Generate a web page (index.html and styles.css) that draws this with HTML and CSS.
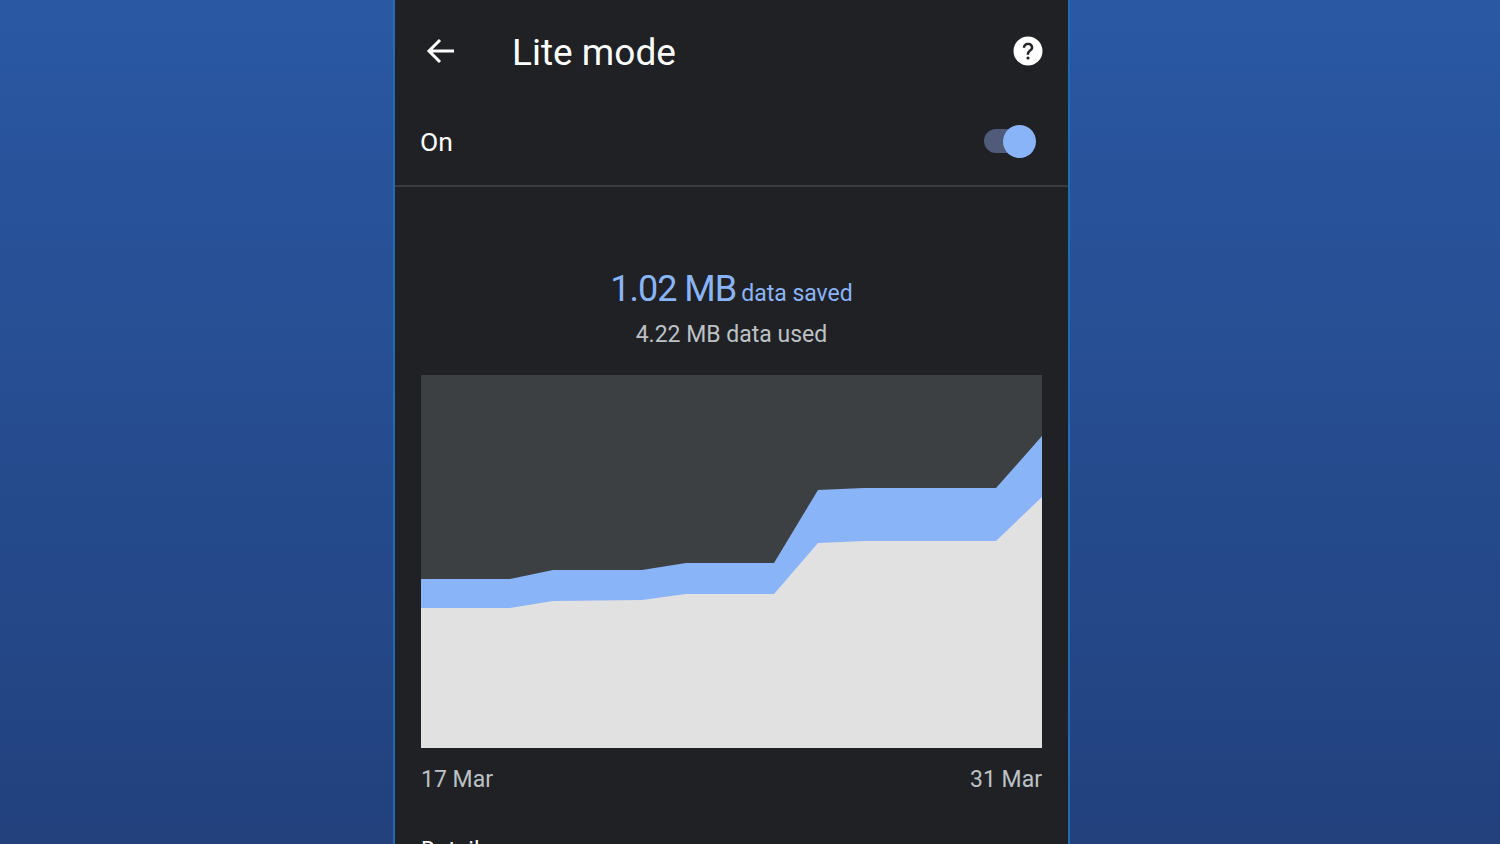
FILE: index.html
```html
<!DOCTYPE html>
<html lang="en">
<head>
  <meta charset="UTF-8">
  <meta name="viewport" content="width=device-width, initial-scale=1.0">
  <title>Lite mode</title>
  <link rel="stylesheet" href="styles.css">
</head>
<body>
  <div class="phone">
    <div class="toolbar">
      <svg class="back" width="30" height="26" viewBox="0 0 30 26">
        <path d="M28 13H3M14 2L3 13l11 11" fill="none" stroke="#fff" stroke-width="3"/>
      </svg>
      <div class="title">Lite mode</div>
      <svg class="help" width="30" height="30" viewBox="0 0 30 30">
        <circle cx="15" cy="15" r="14.5" fill="#fff"/>
        <path d="M9.8 11.8c0-3 2.3-5 5.3-5s5.200 2 5.200 4.700c0 3.600-4.200 3.700-4.200 7.300h-2.400c0-4.800 4.100-4.700 4.100-7.200 0-1.500-1.200-2.500-2.700-2.500s-2.800 1-2.800 2.700z" fill="#202124"/>
        <circle cx="15" cy="22" r="1.600" fill="#202124"/>
      </svg>
    </div>
    <div class="switch-row">
      <span class="on-label">On</span>
      <div class="switch"><div class="knob"></div></div>
    </div>
    <div class="summary">
      <div class="saved"><span class="saved-num">1.02 MB</span> <span class="saved-label">data saved</span></div>
      <div class="used">4.22 MB data used</div>
    </div>
    <svg class="chart" width="621" height="373" viewBox="0 0 621 373">
      <rect width="621" height="373" fill="#3c4043"/>
      <polygon fill="#8ab4f8" points="0,204 89,204 132,195 221,195 265,188 353,188 397,115 443,113 575,113 621,61 621,373 0,373"/>
      <polygon fill="#e1e1e1" points="0,233 89,233 132,226 221,225 265,219 353,219 397,168 443,166 575,166 621,122 621,373 0,373"/>
    </svg>
    <div class="dates">
      <span>17 Mar</span>
      <span>31 Mar</span>
    </div>
    <div class="details">Details</div>
  </div>
</body>
</html>
```

FILE: styles.css
```css
body {
  margin: 0;
  height: 844px;
  overflow: hidden;
  display: flex;
  background: linear-gradient(#2a58a3, #22417d);
  font-family: Roboto, "Liberation Sans", sans-serif;
}

.phone {
  box-sizing: border-box;
  width: 677px;
  height: 844px;
  margin-left: 393px;
  padding: 0 26px;
  overflow: hidden;
  background: #202124;
  border-left: 2px solid #1f6cb5;
  border-right: 2px solid #1f6cb5;
  color: #fff;
}

.toolbar {
  display: flex;
  align-items: center;
  height: 102px;
}

.back {
  margin-left: 5px;
}

.title {
  flex: 1;
  margin-left: 56px;
  padding-top: 2px;
  font-size: 37px;
}

.help {
  margin-right: -1px;
}

.switch-row {
  display: flex;
  align-items: center;
  justify-content: space-between;
  height: 78px;
  margin: 0 -26px;
  padding: 0 33px 5px 25px;
  border-bottom: 2px solid #3a3b3e;
}

.on-label {
  font-size: 26.5px;
}

.switch {
  display: flex;
  align-items: center;
  justify-content: flex-end;
  width: 51px;
  height: 24px;
  border-radius: 12px;
  background: #4f5b78;
}

.knob {
  flex: none;
  width: 33px;
  height: 33px;
  margin-right: -1px;
  border-radius: 50%;
  background: #8ab4f8;
}

.summary {
  text-align: center;
  padding-top: 80px;
  height: 108px;
}

.saved {
  color: #8ab4f8;
  line-height: 44px;
}

.saved-num {
  margin-right: 1px;
  font-size: 36px;
  letter-spacing: -1px;
}

.saved-label {
  font-size: 23px;
}

.used {
  margin-top: 3px;
  font-size: 23px;
  color: #bdc1c6;
}

.chart {
  display: block;
}

.dates {
  display: flex;
  justify-content: space-between;
  margin-top: 18px;
  font-size: 23px;
  color: #bdc1c6;
}

.details {
  margin-top: 44px;
  font-size: 23px;
}
```
